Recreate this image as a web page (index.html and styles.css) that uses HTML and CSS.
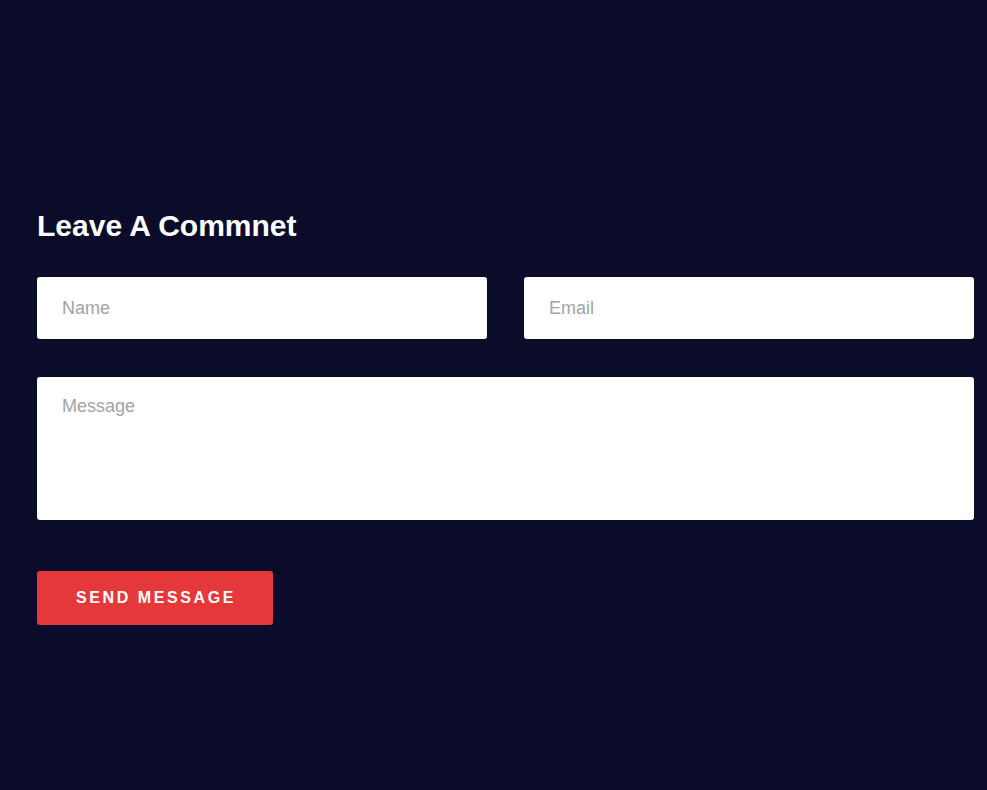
FILE: index.html
```html
<!DOCTYPE html>
<html>
<head>
<meta charset="utf-8">
<link rel="stylesheet" href="styles.css">
</head>
<body>
<section class="comment">
  <h2 class="comment-title">Leave A Commnet</h2>
  <form class="comment-form">
    <div class="row">
      <input class="field" type="text" placeholder="Name">
      <input class="field" type="email" placeholder="Email">
    </div>
    <textarea class="field message" placeholder="Message"></textarea>
    <button class="send" type="button">SEND MESSAGE</button>
  </form>
</section>
</body>
</html>
```
FILE: styles.css
```css
html, body {
  margin: 0;
  padding: 0;
  background: #0b0c29;
  height: 100%;
}
body {
  font-family: "Liberation Sans", Arial, sans-serif;
}
.comment {
  padding: 209px 13px 0 37px;
}
.comment-title {
  margin: 0 0 35px;
  color: #ffffff;
  font-size: 30px;
  font-weight: 700;
  line-height: 33px;
}
.comment-form {
  display: flex;
  flex-direction: column;
  align-items: flex-start;
}
.row {
  display: grid;
  grid-template-columns: 1fr 1fr;
  column-gap: 37px;
  width: 100%;
  margin-bottom: 38px;
}
.field {
  box-sizing: border-box;
  border: none;
  outline: none;
  background: #ffffff;
  border-radius: 3px;
  font-family: "Liberation Sans", Arial, sans-serif;
  font-size: 18px;
  color: #333;
  padding: 0 25px;
  margin: 0;
}
.row .field {
  height: 62px;
  width: 100%;
}
.field::placeholder {
  color: #a3a3a8;
}
.message {
  width: 100%;
  height: 143px;
  padding-top: 19px;
  resize: none;
  display: block;
  line-height: 20px;
  margin-bottom: 51px;
}
.send {
  width: 236px;
  height: 54px;
  border: none;
  border-radius: 3px;
  background: #e5383b;
  color: #ffffff;
  font-family: "Liberation Sans", Arial, sans-serif;
  font-size: 16px;
  font-weight: 700;
  letter-spacing: 2.6px;
  padding: 0 0 0 2px;
  cursor: pointer;
}
```
